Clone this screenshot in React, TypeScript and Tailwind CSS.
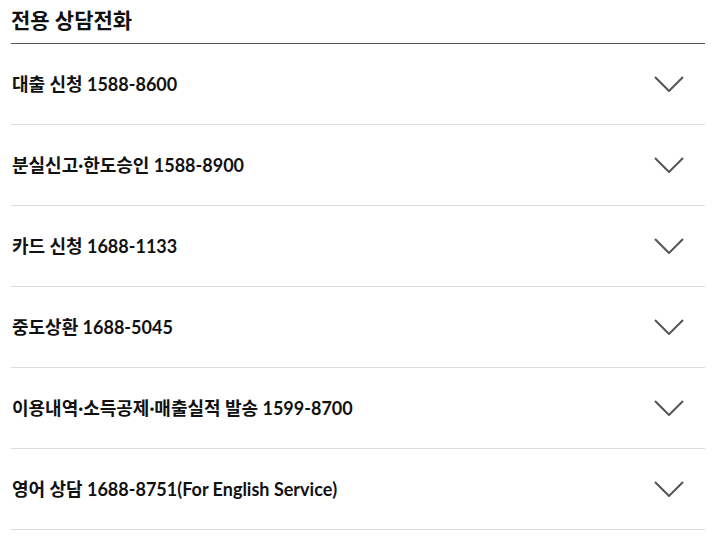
const items = [
  "대출 신청 1588-8600",
  "분실신고·한도승인 1588-8900",
  "카드 신청 1688-1133",
  "중도상환 1688-5045",
  "이용내역·소득공제·매출실적 발송 1599-8700",
  "영어 상담 1688-8751(For English Service)",
];

function Chevron() {
  return (
    <svg width="30" height="16" viewBox="0 0 30 16" fill="none" className="text-[#555]">
      <path d="M1 1 L15 15 L29 1" stroke="currentColor" strokeWidth="2" />
    </svg>
  );
}

export default function App() {
  return (
    <div
      className="min-h-screen bg-white px-[11px] text-[#111]"
      style={{ fontFamily: 'Lato, "Noto Sans CJK KR", sans-serif' }}
    >
      <div className="flex h-[44px] items-center border-b border-[#555] pb-1">
        <h2 className="text-[21px] font-semibold leading-none">전용 상담전화</h2>
      </div>
      <ul>
        {items.map((label) => (
          <li
            key={label}
            className="flex h-[81px] items-center justify-between border-b border-[#ddd] pl-[1px] pr-[21px]"
          >
            <span className="text-[18px] font-bold leading-none">{label}</span>
            <Chevron />
          </li>
        ))}
      </ul>
    </div>
  );
}
